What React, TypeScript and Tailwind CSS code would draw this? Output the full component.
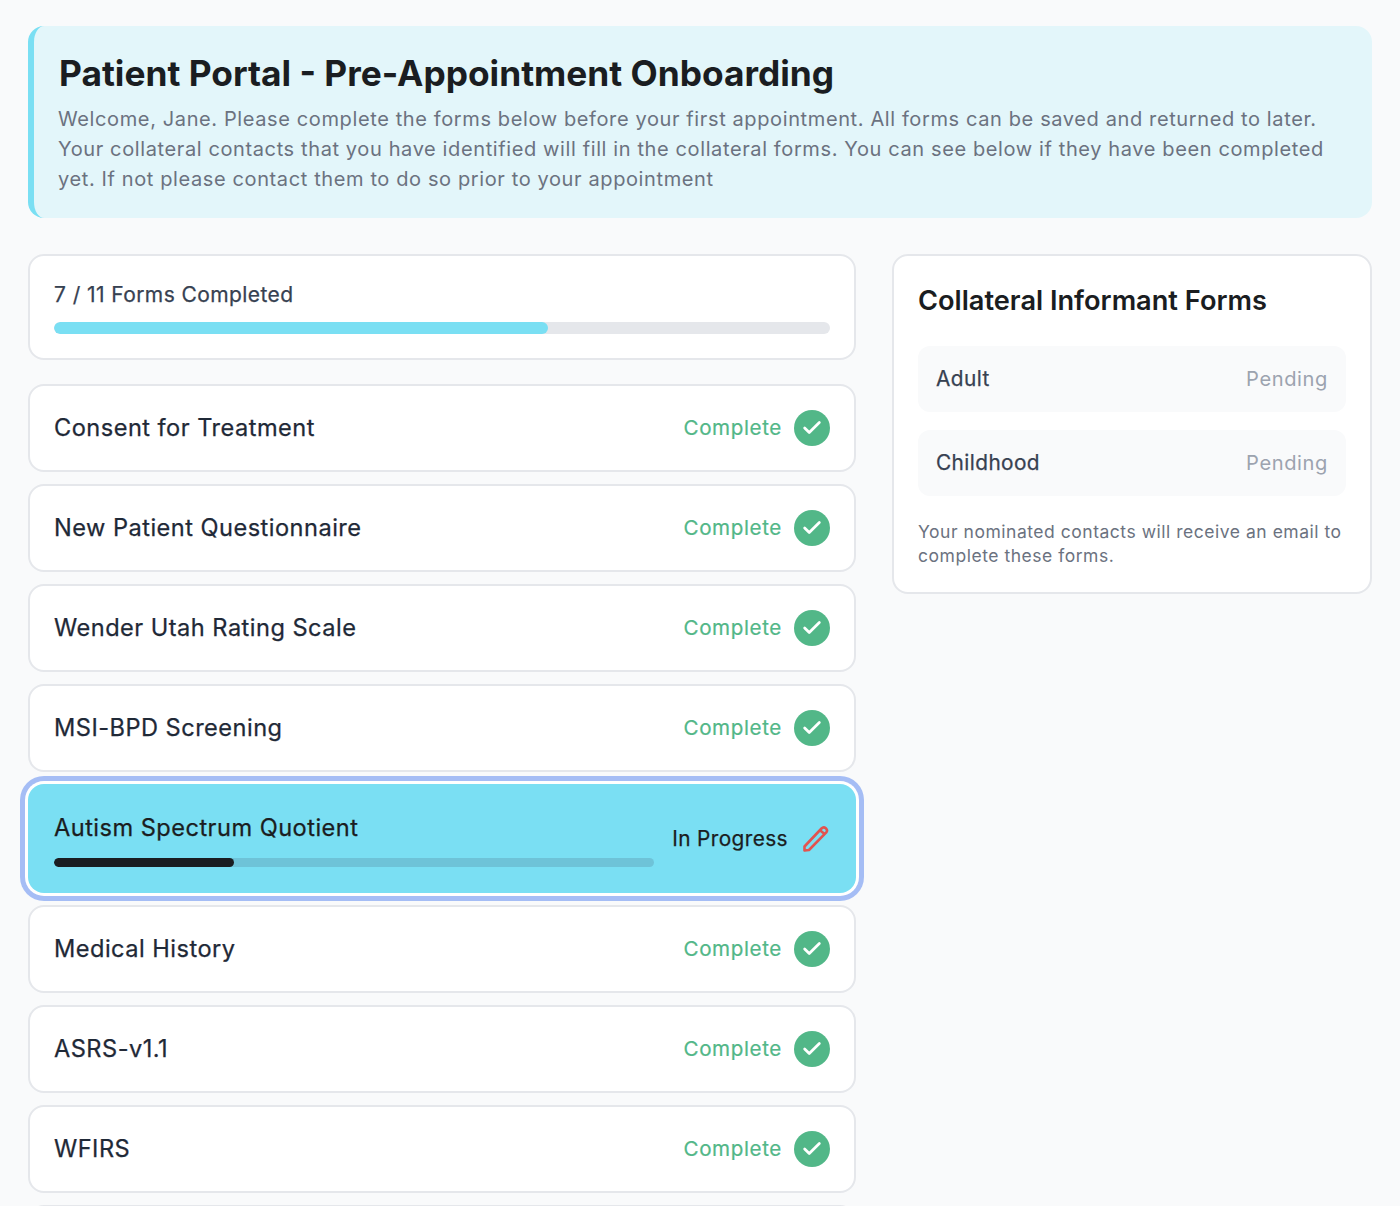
import React from "react";
import { Check } from "lucide-react";

const before = ["Consent for Treatment", "New Patient Questionnaire", "Wender Utah Rating Scale", "MSI-BPD Screening"];
const after = ["Medical History", "ASRS-v1.1", "WFIRS"];

function Row({ name }: { name: string }) {
  return (
    <div className="flex h-[88px] items-center justify-between rounded-2xl border-2 border-[#e5e7eb] bg-white px-6">
      <span className="text-[23.6px] font-normal tracking-[0.02em] text-[#1f2937] [-webkit-text-stroke:0.25px]">{name}</span>
      <div className="flex items-center gap-3">
        <span className="text-[20.6px] font-normal tracking-[0.03em] text-[#52b788] [-webkit-text-stroke:0.2px]">Complete</span>
        <span className="flex h-9 w-9 items-center justify-center rounded-full bg-[#52b788]">
          <Check size={22} strokeWidth={3} className="text-white" />
        </span>
      </div>
    </div>
  );
}

function Pencil() {
  return (
    <svg width="28" height="28" viewBox="0 0 28 28" fill="none" stroke="#e2534f" strokeWidth="2.6" strokeLinejoin="round">
      <path d="M2.5 21.5 L19.5 3.5 Q21.5 1.5 23.8 3.2 Q26 5.3 24.3 7.4 L7 25 L2.5 25.5 Z" />
      <path d="M18 5.2 L22.6 9" />
    </svg>
  );
}

function Pending({ name }: { name: string }) {
  return (
    <div className="flex h-[66px] items-center justify-between rounded-xl bg-[#f9fafb] px-[18px]">
      <span className="text-[20.8px] font-normal tracking-[0.02em] text-[#374151] [-webkit-text-stroke:0.25px]">{name}</span>
      <span className="text-[20.1px] tracking-[0.03em] text-[#9ca3af]">Pending</span>
    </div>
  );
}

export default function App() {
  return (
    <div className="h-[1206px] overflow-hidden bg-[#f9fafb] px-7 pt-[26px] font-['Inter',sans-serif]">
      <div className="mb-9 h-[192px] rounded-2xl border-l-[6px] border-[#7adff3] bg-[#e3f6fa] pl-[25px] pr-6 pt-6">
        <h1 className="text-[35.3px] leading-[48px] font-bold text-[#1a1d21]">Patient Portal - Pre-Appointment Onboarding</h1>
        <p className="-ml-px mt-[6px] text-[20.04px] leading-[30px] tracking-[0.03em] text-[#6b7280]">
          Welcome, Jane. Please complete the forms below before your first appointment. All forms can be saved and returned to later. Your collateral contacts that you have identified will fill in the collateral forms. You can see below if they have been completed yet. If not please contact them to do so prior to your appointment
        </p>
      </div>
      <div className="flex items-start gap-9">
        <div className="w-[828px] shrink-0">
          <div className="mb-6 h-[106px] rounded-2xl border-2 border-[#e5e7eb] bg-white px-6 pt-6">
            <div className="text-[21px] leading-[30px] font-normal tracking-[0.02em] text-[#374151] [-webkit-text-stroke:0.25px]">7 / 11 Forms Completed</div>
            <div className="mt-3 h-3 overflow-hidden rounded-full bg-[#e5e7eb]">
              <div className="h-full w-[63.6%] rounded-full bg-[#7adff3]" />
            </div>
          </div>
          <div className="flex flex-col gap-3">
            {before.map((n) => <Row key={n} name={n} />)}
            <div className="flex h-[109px] items-center justify-between rounded-2xl bg-[#7adff3] pl-[26px] pr-[26px] ring-[5px] ring-[#a5bdf5] ring-offset-[3px] ring-offset-white">
              <div className="w-[600px] pt-[2px]">
                <div className="text-[23.6px] leading-[32px] font-normal tracking-[0.02em] text-[#1a1d21] [-webkit-text-stroke:0.25px]">Autism Spectrum Quotient</div>
                <div className="mt-[14px] h-[9px] overflow-hidden rounded-full bg-[#6ec3d8]">
                  <div className="h-full w-[30%] rounded-full bg-[#1a1d21]" />
                </div>
              </div>
              <div className="flex items-center gap-3.5 pt-px">
                <span className="text-[20.8px] font-normal tracking-[0.02em] text-[#1a1d21] [-webkit-text-stroke:0.25px]">In Progress</span>
                <Pencil />
              </div>
            </div>
            {after.map((n) => <Row key={n} name={n} />)}
            <div className="h-[88px] rounded-2xl border-2 border-[#e5e7eb] bg-white" />
          </div>
        </div>
        <div className="h-[340px] w-[480px] rounded-2xl border-2 border-[#e5e7eb] bg-white px-6 pt-[27px]">
          <h2 className="text-[27.2px] leading-[36px] font-semibold text-[#1a1d21]">Collateral Informant Forms</h2>
          <div className="mt-[27px] flex flex-col gap-[18px]">
            <Pending name="Adult" />
            <Pending name="Childhood" />
          </div>
          <p className="mt-6 text-[17.5px] leading-6 tracking-[0.03em] text-[#6b7280]">Your nominated contacts will receive an email to complete these forms.</p>
        </div>
      </div>
    </div>
  );
}
